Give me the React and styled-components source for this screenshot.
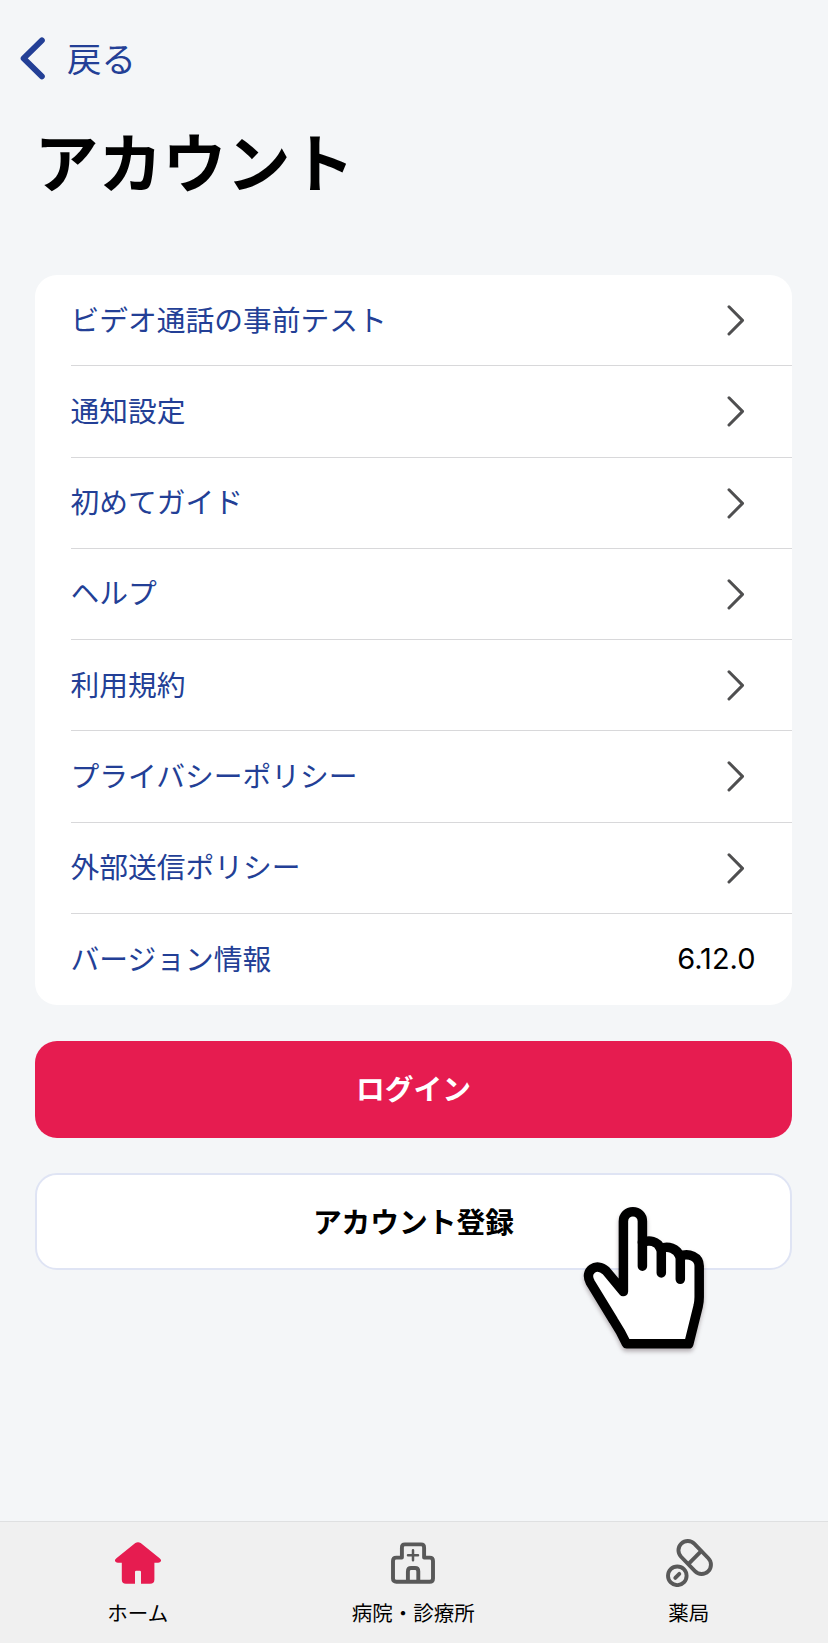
import React from "react";
import styled, { createGlobalStyle } from "styled-components";

const menu_list = [
  "ビデオ通話の事前テスト",
  "通知設定",
  "初めてガイド",
  "ヘルプ",
  "利用規約",
  "プライバシーポリシー",
  "外部送信ポリシー",
];

const HomeIcon = () => (
  <svg width="48" height="44" viewBox="0 0 48 44" fill="#e61c50">
    <path d="M21.3 2.1Q24 0.2 26.7 2.1L45.6 17.2C48.4 19.5 46.8 21.8 44 21.8H40.4V38.5Q40.4 42.8 36 42.8H27V31Q27 29.8 25.8 29.8H22.2Q21 29.8 21 31V42.8H12Q7.8 42.8 7.8 38.5V21.8H4C1.2 21.8-0.4 19.5 2.4 17.2Z" />
  </svg>
);

const HospitalIcon = () => (
  <svg width="48" height="44" viewBox="0 0 48 44" fill="none" stroke="#595959" strokeWidth="3.9" strokeLinejoin="round">
    <path d="M12.9 16.6V6.4Q12.9 3.4 15.9 3.4H32.1Q35.1 3.4 35.1 6.4V16.6H40.6Q44 16.6 44 20V37.4Q44 40.8 40.6 40.8H7.4Q4 40.8 4 37.4V20Q4 16.6 7.4 16.6Z" />
    <path d="M18.9 41V30.4Q18.9 27 22.2 27H26Q29.3 27 29.3 30.4V41" />
    <path d="M24 9.2V19.2M19 14.2H29" strokeWidth="2.5" strokeLinecap="round" />
  </svg>
);

const PillIcon = () => (
  <svg width="48" height="48" viewBox="0 0 48 48" fill="none" stroke="#595959" strokeWidth="3.9">
    <rect x="9.4" y="9.2" width="38.6" height="18.6" rx="9.3" transform="rotate(46 28.7 18.5)" />
    <path d="M22.3 25.2L35.2 12.2" />
    <circle cx="11.3" cy="36.8" r="9.3" />
    <path d="M9.3 38.9L13.3 34.9" strokeLinecap="round" />
  </svg>
);

const Pointer = () => (
  <svg width="128" height="152" viewBox="0 0 128 152" fill="#fff" stroke="#000" strokeWidth="9.5" strokeLinejoin="round" strokeLinecap="round">
    <path d="M43.4 91.6V21.2A9.5 9.5 0 0 1 62.4 21.2V42.6C69 39.4 77.5 41 80.6 48.6C88 45.4 97 48.4 99.8 56.2C109 52.4 119.2 57 119.2 66V97Q119.2 101.5 118.2 106L108.8 143.8H46.5C42 134 37.8 127 33.5 120.5L10.4 82.6C3.6 70.5 16.5 61.8 26 70.8Z" />
    <path d="M62.4 42V66.2M81.3 49V73M100.3 57V79.3" />
  </svg>
);

const App = () => {
  return (
    <Screen>
      <GlobalStyle />
      <BackButton>
        <svg width="28" height="44" viewBox="0 0 28 44" fill="none" stroke="#233f96" strokeWidth="5.8" strokeLinecap="round" strokeLinejoin="round">
          <path d="M22.9 4.4L4.6 22.4L22.9 40.4" />
        </svg>
        <BackLabel>戻る</BackLabel>
      </BackButton>
      <Title>アカウント</Title>
      <Content>
        <MenuCard>
          {menu_list.map((label) => (
            <MenuRow key={label}>
              <MenuLabel>{label}</MenuLabel>
              <svg width="18" height="32" viewBox="0 0 18 32" fill="none" stroke="#4f4f50" strokeWidth="3" strokeLinecap="round" strokeLinejoin="round">
                <path d="M2 2.8L15.5 16.4L2 30" />
              </svg>
            </MenuRow>
          ))}
          <MenuRow $last>
            <MenuLabel>バージョン情報</MenuLabel>
            <Version>6.12.0</Version>
          </MenuRow>
        </MenuCard>
        <LoginButton>
          <ButtonLabel>ログイン</ButtonLabel>
        </LoginButton>
        <SignupButton>
          <ButtonLabel>アカウント登録</ButtonLabel>
          <PointerWrap>
            <Pointer />
          </PointerWrap>
        </SignupButton>
      </Content>
      <TabBar>
        <Tab>
          <IconBox><HomeIcon /></IconBox>
          ホーム
        </Tab>
        <Tab>
          <IconBox><HospitalIcon /></IconBox>
          病院・診療所
        </Tab>
        <Tab>
          <IconBox $shift="1.5px"><PillIcon /></IconBox>
          薬局
        </Tab>
      </TabBar>
    </Screen>
  );
};

const GlobalStyle = createGlobalStyle`
  * {
    box-sizing: border-box;
  }
  body {
    margin: 0;
    background-color: #f4f6f8;
  }
  button {
    font: inherit;
    border: none;
    background: none;
    padding: 0;
    cursor: pointer;
  }
`;

const Screen = styled.div`
  display: flex;
  flex-direction: column;
  width: 828px;
  height: 1643px;
  overflow: hidden;
  background-color: #f4f6f8;
  color: #000;
  font-family: "Noto Sans CJK JP", sans-serif;
`;

const BackButton = styled.button`
  display: flex;
  align-items: center;
  align-self: flex-start;
  gap: 20px;
  height: 44px;
  margin: 36px 0 0 19px;
  color: #233f96;
`;

const BackLabel = styled.span`
  margin-top: -2px;
  font-size: 34.4px;
  line-height: 42px;
`;

const Title = styled.h1`
  margin: 31px 0 0 34.5px;
  font-size: 64px;
  font-weight: 700;
  line-height: 96px;
`;

const Content = styled.div`
  display: flex;
  flex-direction: column;
  gap: 35.5px;
  padding: 68px 36px 0 35px;
`;

const MenuCard = styled.div`
  padding-left: 35.5px;
  border-radius: 22px;
  background-color: #fff;
`;

const MenuRow = styled.div`
  display: flex;
  align-items: center;
  justify-content: space-between;
  height: 91.25px;
  padding-right: ${(props) => (props.$last ? "36.5px" : "47px")};
  border-bottom: ${(props) => (props.$last ? "none" : "1px solid #d8d8da")};
`;

const MenuLabel = styled.span`
  margin-top: -4px;
  color: #233f96;
  font-size: 28.75px;
`;

const Version = styled.span`
  margin-top: -1px;
  color: #000;
  font-family: Inter, sans-serif;
  font-size: 29px;
`;

const LoginButton = styled.button`
  height: 97px;
  border-radius: 22px;
  && {
    background-color: #e61c50;
    color: #fff;
    font-size: 28.75px;
    font-weight: 700;
  }
`;

const SignupButton = styled(LoginButton)`
  position: relative;
  && {
    border: 2px solid #dfe4f4;
    background-color: #fff;
    color: #000;
  }
`;

const ButtonLabel = styled.span`
  display: block;
  margin-top: -3px;
`;

const PointerWrap = styled.span`
  position: absolute;
  left: 543px;
  top: 25px;
  line-height: 0;
  filter: drop-shadow(0 3px 2px rgba(60, 40, 50, 0.35));
`;

const TabBar = styled.nav`
  display: grid;
  grid-template-columns: repeat(3, 1fr);
  height: 122px;
  margin-top: auto;
  padding-right: 1.5px;
  border-top: 1px solid #dfe0e1;
  background-color: #f0f0f0;
`;

const Tab = styled.div`
  display: flex;
  flex-direction: column;
  align-items: center;
  padding-top: 16px;
  font-size: 20.5px;
  line-height: 30px;
`;

const IconBox = styled.div`
  display: flex;
  align-items: center;
  justify-content: center;
  height: 50px;
  margin-bottom: 9px;
  padding-left: ${(props) => props.$shift || "0"};
`;

export default App;
